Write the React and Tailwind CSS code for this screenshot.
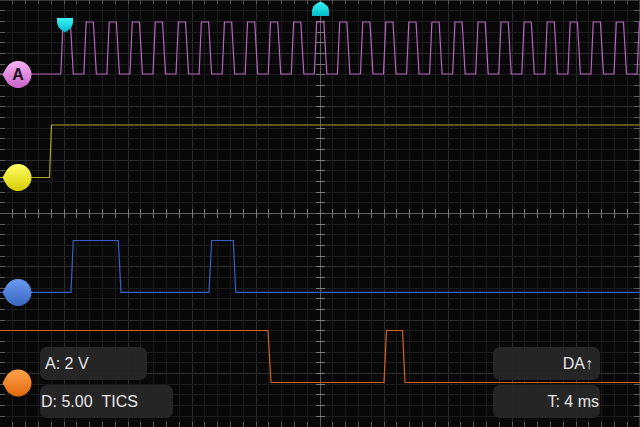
import React from "react";

const W = 640;
const H = 427;
const DX = 12.8;
const DY = 10.675;

function Grid() {
  const v = [];
  for (let i = 1; i < 50; i++) {
    if (i === 25) continue;
    const major = i % 5 === 0;
    v.push(
      <line key={"v" + i} x1={i * DX} y1={0} x2={i * DX} y2={H} stroke={major ? "#2c2c2c" : "#1b1b1b"} strokeWidth={1} />
    );
  }
  const h = [];
  for (let j = 1; j < 40; j++) {
    if (j === 20) continue;
    const major = j % 5 === 0;
    h.push(
      <line key={"h" + j} x1={0} y1={j * DY} x2={W} y2={j * DY} stroke={major ? "#2c2c2c" : "#1b1b1b"} strokeWidth={1} />
    );
  }
  const ticks = [];
  for (let i = 1; i < 50; i++) {
    const x = i * DX;
    ticks.push(<line key={"tc" + i} x1={x} y1={209} x2={x} y2={218} stroke="#7a7a7a" />);
    ticks.push(<line key={"tt" + i} x1={x} y1={0} x2={x} y2={4} stroke="#5a5a5a" />);
    ticks.push(<line key={"tb" + i} x1={x} y1={H - 5} x2={x} y2={H} stroke="#5a5a5a" />);
  }
  for (let j = 1; j < 40; j++) {
    const y = j * DY;
    ticks.push(<line key={"tv" + j} x1={316} y1={y} x2={325} y2={y} stroke="#7a7a7a" />);
    ticks.push(<line key={"tl" + j} x1={0} y1={y} x2={5} y2={y} stroke="#5a5a5a" />);
    ticks.push(<line key={"tr" + j} x1={W - 6} y1={y} x2={W} y2={y} stroke="#5a5a5a" />);
  }
  return (
    <g shapeRendering="crispEdges">
      {v}
      {h}
      <line x1={0} y1={213.5} x2={W} y2={213.5} stroke="#5c5c5c" />
      <line x1={320.5} y1={0} x2={320.5} y2={H} stroke="#5c5c5c" />
      <line x1={0} y1={0.5} x2={W} y2={0.5} stroke="#3a3a3a" />
      <line x1={W - 0.5} y1={0} x2={W - 0.5} y2={H} stroke="#3a3a3a" />
      {ticks}
    </g>
  );
}

function pinkPath() {
  const lo = 74;
  const hi = 22;
  const x0 = 60.8;
  const P = 23.05;
  let d = `M0,${lo} L${x0},${lo}`;
  for (let k = 0; k < 30; k++) {
    const x = x0 + k * P;
    if (x > W) break;
    d += ` L${(x + 2.3).toFixed(2)},${hi} L${(x + 9.5).toFixed(2)},${hi} L${(x + 12.5).toFixed(2)},${lo} L${(x + P).toFixed(2)},${lo}`;
  }
  return d;
}

function Marker({ cy, id, c1, c2, label }) {
  const cx = 18;
  const r = 13.5;
  const tx = 5.85;
  const ty = 5.88;
  return (
    <g>
      <defs>
        <linearGradient id={id} x1="0" y1="0" x2="0" y2="1">
          <stop offset="0" stopColor={c1} />
          <stop offset="1" stopColor={c2} />
        </linearGradient>
      </defs>
      <path
        d={`M2.5,${cy} L${tx},${cy - ty} A${r},${r} 0 1 1 ${tx},${cy + ty} Z`}
        fill={`url(#${id})`}
      />
      {label && (
        <text
          x={cx}
          y={cy + 5.5}
          textAnchor="middle"
          fontFamily="'Liberation Sans', Arial, sans-serif"
          fontWeight="bold"
          fontSize="16"
          fill="#1a0d1a"
        >
          {label}
        </text>
      )}
    </g>
  );
}

function Scope() {
  return (
    <svg width={W} height={H} viewBox={`0 0 ${W} ${H}`} className="absolute inset-0">
      <defs>
        <linearGradient id="cy1" x1="0" y1="0" x2="0" y2="1">
          <stop offset="0" stopColor="#3ef6f6" />
          <stop offset="1" stopColor="#00b8c8" />
        </linearGradient>
      </defs>
      <rect x="0" y="0" width={W} height={H} fill="#080808" />
      <Grid />
      <path d={pinkPath()} fill="none" stroke="#b865c0" strokeWidth="1.2" />
      <path d="M0,177.5 L49.5,177.5 L51.5,125 L640,125" fill="none" stroke="#aca41c" strokeWidth="1.2" />
      <path
        d="M0,292.3 L71,292.3 L73.3,240.5 L118.3,240.5 L121,292.3 L209,292.3 L211.7,240.5 L233.3,240.5 L235.7,292.3 L640,292.3"
        fill="none"
        stroke="#3860c4"
        strokeWidth="1.2"
      />
      <path
        d="M0,330.5 L268,330.5 L271,382.5 L384,382.5 L386.5,330.5 L402.5,330.5 L405,382.5 L640,382.5"
        fill="none"
        stroke="#d4641a"
        strokeWidth="1.2"
      />
      <path d="M57,18 L73,18 L73,22 Q73,28 65,32.5 Q57,28 57,22 Z" fill="url(#cy1)" />
      <path d="M312,16 L329,16 L329,11 Q329,5 320.5,1.5 Q312,5 312,11 Z" fill="url(#cy1)" />
      <Marker cy={74.5} id="mA" c1="#f7b2f4" c2="#c862c8" label="A" />
      <Marker cy={177.5} id="mY" c1="#ffff66" c2="#d6cc00" />
      <Marker cy={292.5} id="mB" c1="#6a9af0" c2="#3a66c0" />
      <Marker cy={383} id="mO" c1="#ffa24a" c2="#e0680e" />
    </svg>
  );
}

function Box({ children, className }) {
  return (
    <div
      className={
        "h-[33px] rounded-[7px] bg-[#272727]/95 flex items-center text-[16px] leading-none text-[#e6e6e6] " +
        className
      }
      style={{ fontFamily: "'Liberation Sans', Arial, sans-serif" }}
    >
      {children}
    </div>
  );
}

export default function App() {
  return (
    <div className="relative w-[640px] h-[427px] overflow-hidden bg-[#080808]">
      <Scope />
      <div className="absolute left-[40px] right-[40px] top-[347px] flex justify-between">
        <div className="flex flex-col gap-[5px]">
          <Box className="w-[107px] pl-[5px]">A: 2 V</Box>
          <Box className="w-[133px] pl-[1px]">
            D: 5.00&nbsp;&nbsp;TICS
          </Box>
        </div>
        <div className="flex flex-col gap-[5px]">
          <Box className="w-[107px] justify-end pr-[7px]">DA↑</Box>
          <Box className="w-[107px] justify-end pr-[1px]">T: 4 ms</Box>
        </div>
      </div>
    </div>
  );
}
